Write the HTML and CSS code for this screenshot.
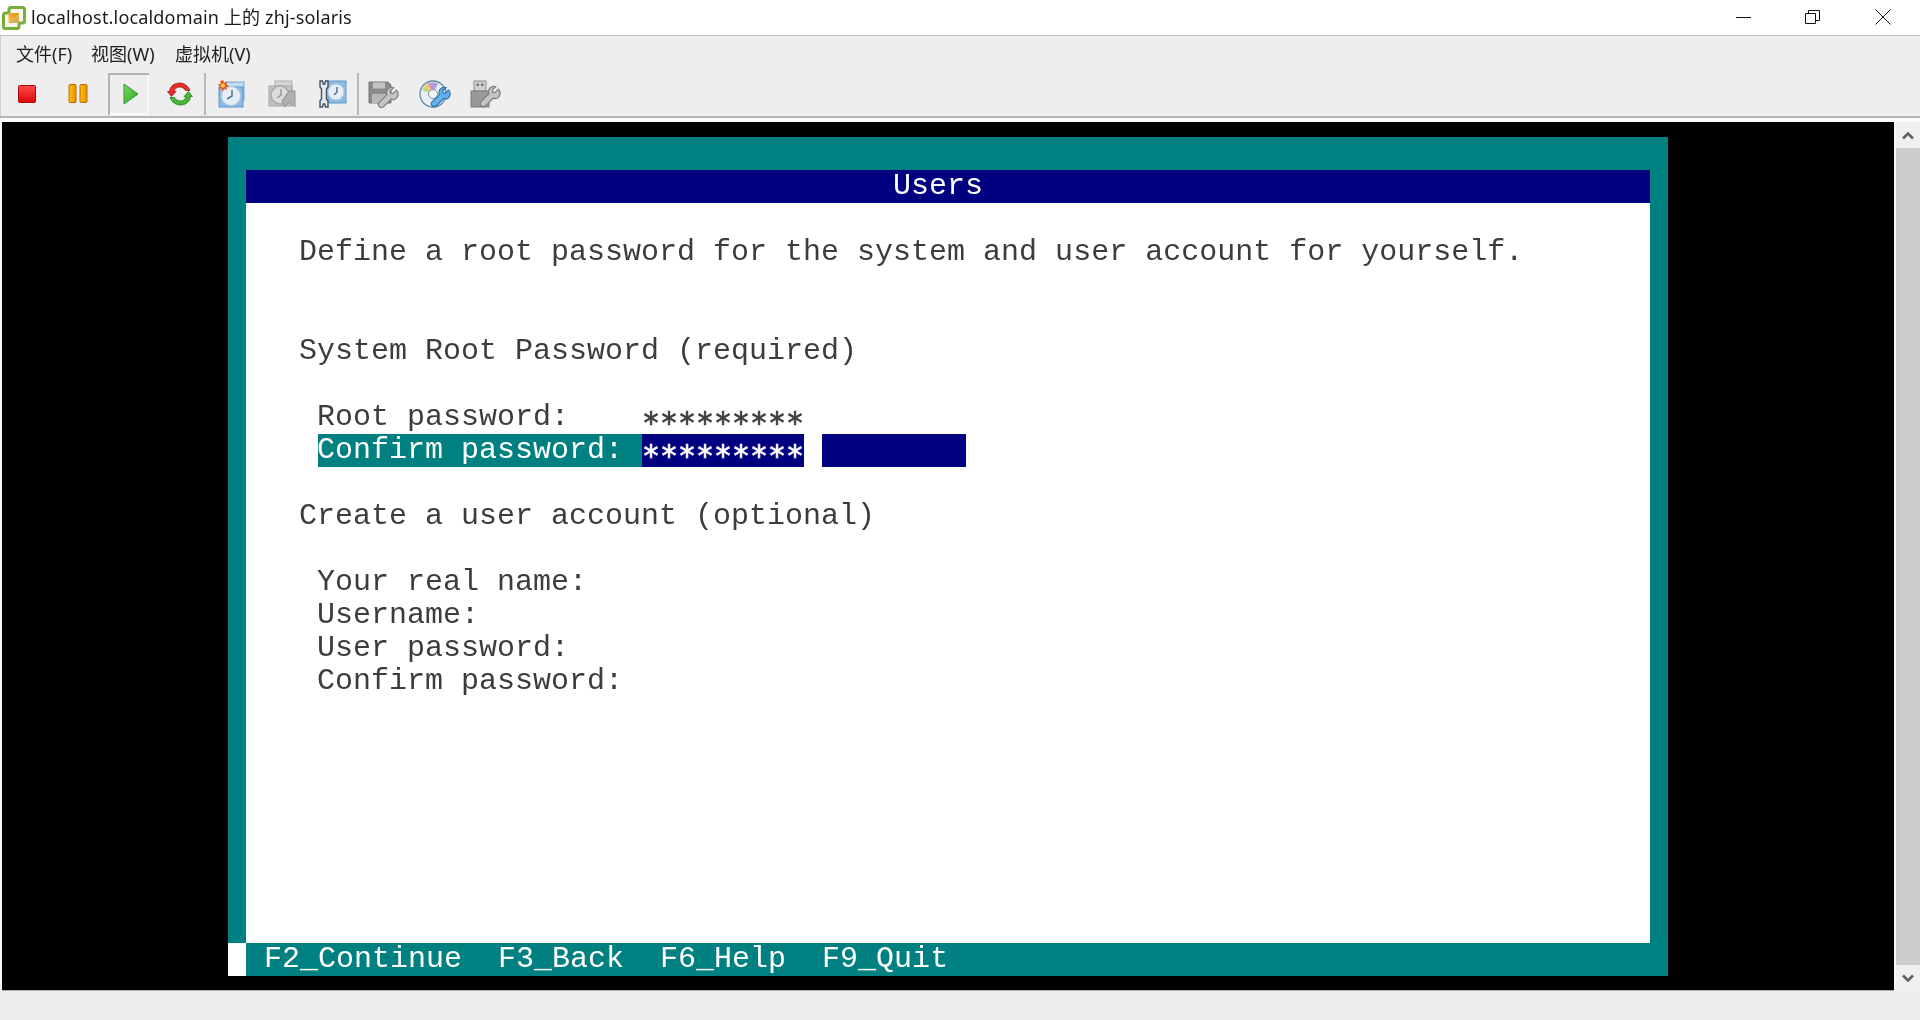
FILE: index.html
```html
<!DOCTYPE html>
<html lang="zh">
<head>
<meta charset="utf-8">
<title>localhost.localdomain 上的 zhj-solaris</title>
<link rel="stylesheet" href="styles.css">
</head>
<body>
<svg class="defs" width="0" height="0" aria-hidden="true">
  <defs>
    <linearGradient id="gStop" x1="0" y1="0" x2="0" y2="1"><stop offset="0" stop-color="#ff4a4a"/><stop offset="1" stop-color="#dc0606"/></linearGradient>
    <linearGradient id="gPause" x1="0" y1="0" x2="1" y2="0"><stop offset="0" stop-color="#ffc400"/><stop offset="1" stop-color="#f08c00"/></linearGradient>
    <linearGradient id="gPlay" x1="0" y1="0" x2="1" y2="1"><stop offset="0" stop-color="#7bd85a"/><stop offset="1" stop-color="#2aa52a"/></linearGradient>
    <linearGradient id="gLogo" x1="0" y1="1" x2="1" y2="0"><stop offset="0" stop-color="#f6c453"/><stop offset="1" stop-color="#e58a0c"/></linearGradient>
    <symbol id="wrench" viewBox="0 0 24 24" overflow="visible">
      <path d="M21 3.500L17 7.500 14.500 7 14 4.500 18 .800C14.500-.5 10.500 1.500 9.800 5c-.3 1.500 0 2.800.5 3.800L1.500 17.500c-1.500 1.500-1.500 3.500 0 5s3.500 1.500 5 0l8.700-8.700c1.300.6 2.800.7 4.300.2 3.500-1.300 5-7 1.500-10.500z"/>
    </symbol>
  </defs>
</svg>
<div class="window">
  <header class="titlebar">
    <svg class="app-icon" viewBox="0 0 24 24" width="24" height="24">
      <path d="M9 1.500h11.500a2 2 0 0 1 2 2V15a2 2 0 0 1-2 2H17v3.500a2 2 0 0 1-2 2H3.500a2 2 0 0 1-2-2V9a2 2 0 0 1 2-2H7V3.500a2 2 0 0 1 2-2z" fill="#f6f6ee" stroke="#75ae3a" stroke-width="3"/>
      <path d="M6.500 7h10.500v10H6.500z" fill="url(#gLogo)"/>
      <path d="M17 7.500L7 17h10z" fill="#d8b05c"/>
    </svg>
    <span class="title-text">localhost.localdomain 上的 zhj-solaris</span>
    <div class="window-controls">
      <svg class="ctl ctl-min" viewBox="0 0 16 16" width="16" height="16"><path d="M0 8.500h15" stroke="#111" fill="none"/></svg>
      <svg class="ctl ctl-max" viewBox="0 0 16 16" width="16" height="16"><path d="M.5 4.500h10v10H.5zM3.500 4.500v-3h11v10h-4" stroke="#111" fill="none"/></svg>
      <svg class="ctl ctl-close" viewBox="0 0 16 16" width="16" height="16"><path d="M.5.500l15 15M15.500.500l-15 15" stroke="#111" fill="none"/></svg>
    </div>
  </header>

  <nav class="menubar">
    <span class="menu-item m1">文件(F)</span>
    <span class="menu-item m2">视图(W)</span>
    <span class="menu-item m3">虚拟机(V)</span>
  </nav>

  <div class="toolbar">
    <div class="tool">
      <svg viewBox="0 0 18 18" width="18" height="18"><rect x=".5" y=".5" width="17" height="17" rx="1" fill="url(#gStop)" stroke="#a80c0c"/></svg>
    </div>
    <div class="tool">
      <svg viewBox="0 0 20 20" width="20" height="20"><rect x="1" y=".5" width="7" height="18" rx="1" fill="url(#gPause)" stroke="#b86a10"/><rect x="12" y=".5" width="7" height="18" rx="1" fill="url(#gPause)" stroke="#b86a10"/></svg>
    </div>
    <div class="tool tool-active">
      <svg viewBox="0 0 16 22" width="16" height="22"><path d="M1 1l14 10L1 21z" fill="url(#gPlay)" stroke="#2f9a2f"/></svg>
    </div>
    <div class="tool">
      <svg viewBox="0 0 26 24" width="26" height="24">
        <path d="M23 8.500C21 3.500 17 1 12.500 1 7 1 3 4.500 2.500 9.500H.5L4.500 14.500 9 9.500H7C7.500 7 9.500 5 12.500 5c2.500 0 4.500 1 6 3.500z" fill="#e5302a" stroke="#a81c18" stroke-width=".8"/>
        <path d="M23 8.500C21 3.500 17 1 12.500 1 7 1 3 4.500 2.500 9.500H.5L4.500 14.500 9 9.500H7C7.500 7 9.500 5 12.500 5c2.500 0 4.500 1 6 3.500z" transform="rotate(180 13 12)" fill="#47b53a" stroke="#25841e" stroke-width=".8"/>
      </svg>
    </div>
    <span class="tool-sep"></span>
    <div class="tool">
      <svg viewBox="0 0 28 28" width="28" height="28">
        <rect x="9" y="2" width="18" height="18" fill="#c3daf0" stroke="#6fa5d3"/>
        <rect x="2" y="7" width="24" height="20" fill="#8dbbe5" stroke="#5b95c9"/>
        <circle cx="14" cy="16" r="9.500" fill="#e6eef5" stroke="#b3cbe0"/>
        <path d="M15 10v6l-5 3" stroke="#55708e" stroke-width="1.500" fill="none"/>
        <path d="M6 0l1.300 2.800L10 1.500 9.300 4.500 12 6 9.200 7l.8 3-2.800-1.300L5.500 11 4.800 8.300 1.500 9 3 6.200.5 4.500l3-.5L3.500 1z" fill="#f4501c"/>
        <circle cx="6" cy="5.500" r="2" fill="#ffe15a"/>
      </svg>
    </div>
    <div class="tool">
      <svg viewBox="0 0 28 28" width="28" height="28">
        <rect x="7" y="1" width="17" height="18" fill="#d4d4d4" stroke="#adadad"/>
        <rect x="1" y="6" width="23" height="20" fill="#c2c2c2" stroke="#a6a6a6"/>
        <circle cx="12" cy="15" r="9" fill="#dcdcdc" stroke="#a8a8a8" stroke-width="1.500"/>
        <path d="M13 9v6l-4 3" stroke="#9a9a9a" stroke-width="1.500" fill="none"/>
        <path d="M21 11l6 0v16l-6-5-4 5-3-6z" fill="#b0b0b0" stroke="#919191"/>
      </svg>
    </div>
    <div class="tool">
      <svg viewBox="0 0 28 28" width="28" height="28">
        <rect x="9" y="1" width="18" height="22" fill="#8dbbe5" stroke="#5b95c9"/>
        <circle cx="17" cy="12" r="8" fill="#e6eef5" stroke="#b3cbe0"/>
        <path d="M18 7v5l-3 3" stroke="#55708e" stroke-width="1.500" fill="none"/>
        <path d="M1 1h2.500l.8 3h1.400l.8-3H9v6L7.500 9v10L9 21v6H6.500l-.8-3H4.300l-.8 3H1v-6l1.500-2V9L1 7z" fill="#e4e9ef" stroke="#46525f" stroke-width="1.400"/>
      </svg>
    </div>
    <span class="tool-sep"></span>
    <div class="tool">
      <svg viewBox="0 0 31 27" width="31" height="27">
        <path d="M1 1h19l3 3v18H1z" fill="#8b8b8b" stroke="#777"/>
        <rect x="5" y="1.500" width="12" height="6" fill="#c4c4c4"/>
        <rect x="4" y="13" width="16" height="9" fill="#b8b8b8"/>
        <use href="#wrench" x="10" y="6" width="21" height="21" class="wrench-gray"/>
      </svg>
    </div>
    <div class="tool">
      <svg viewBox="0 0 32 29" width="32" height="29">
        <circle cx="14" cy="14" r="13" fill="#e8edf2" stroke="#6d8aa4" stroke-width="1.300"/>
        <path d="M14 14L5 7a11 11 0 0 1 4-3.500z" fill="#f2c23e" opacity=".75"/>
        <path d="M14 14L9 3.500a11 11 0 0 1 5-1z" fill="#d06fc0" opacity=".75"/>
        <path d="M14 14V2.500a11 11 0 0 1 5 1z" fill="#7f90e8" opacity=".75"/>
        <path d="M14 14L5 7a11 11 0 0 0-1.500 3.500z" fill="#9ed65c" opacity=".75"/>
        <circle cx="14" cy="14" r="4.500" fill="#f3f5f7" stroke="#7f92a4"/>
        <use href="#wrench" x="12" y="7" width="20" height="20" class="wrench-blue"/>
      </svg>
    </div>
    <div class="tool">
      <svg viewBox="0 0 31 28" width="31" height="28">
        <rect x="4" y="1" width="12" height="10" fill="#d0d0d0" stroke="#8a8a8a"/>
        <rect x="6.500" y="3.500" width="2.500" height="2.500" fill="#777"/><rect x="11" y="3.500" width="2.500" height="2.500" fill="#777"/>
        <rect x="1" y="11" width="18" height="16" fill="#989898" stroke="#7c7c7c"/>
        <use href="#wrench" x="10" y="6" width="21" height="21" class="wrench-gray"/>
      </svg>
    </div>
  </div>

  <div class="viewport-rule"></div>

  <main class="viewport">
    <div class="console">
      <section class="screen">
        <div class="screen-title">Users</div>
        <div class="panel">
          <div class="line col4">Define a root password for the system and user account for yourself.</div>
          <div class="line col4 gap2">System Root Password (required)</div>
          <div class="line field gap1"><span class="label">Root password:</span><span class="value">*********</span></div>
          <div class="line field active"><span class="label">Confirm password:</span><span class="value">*********</span><span class="extra"></span></div>
          <div class="line col4 gap1">Create a user account (optional)</div>
          <div class="line field gap1">Your real name:</div>
          <div class="line field">Username:</div>
          <div class="line field">User password:</div>
          <div class="line field">Confirm password:</div>
        </div>
        <footer class="keys">
          <span class="keys-corner"></span>
          <span class="key">F2_Continue</span>
          <span class="key">F3_Back</span>
          <span class="key">F6_Help</span>
          <span class="key">F9_Quit</span>
        </footer>
      </section>
    </div>
    <aside class="scrollbar">
      <span class="sb-btn"><svg viewBox="0 0 12 9" width="12" height="9"><path d="M1 7.500l5-5 5 5" stroke="#606060" stroke-width="2.600" fill="none"/></svg></span>
      <span class="sb-thumb"></span>
      <span class="sb-btn"><svg viewBox="0 0 12 9" width="12" height="9"><path d="M1 1.500l5 5 5-5" stroke="#606060" stroke-width="2.600" fill="none"/></svg></span>
    </aside>
  </main>

  <div class="statusbar"></div>
</div>
</body>
</html>
```

FILE: styles.css
```css
* { box-sizing: border-box; }
html, body { margin: 0; padding: 0; height: 100%; overflow: hidden; background: #fff; }
.defs { position: absolute; }
.window {
  width: 1920px; height: 1020px; display: flex; flex-direction: column;
  font-family: "Noto Sans", "Noto Sans CJK SC", sans-serif; color: #1a1a1a;
}
.titlebar {
  height: 36px; flex: none; display: flex; align-items: center; background: #fff;
  border-bottom: 1px solid #c4c4c4; padding-left: 2px;
}
.app-icon { flex: none; margin-top: 0; filter: blur(.3px); }
.title-text { margin-left: 5px; font-size: 18px; letter-spacing: .17px; line-height: 34px; margin-top: -2px; filter: blur(.25px); }
.window-controls { margin-left: auto; display: flex; align-items: center; margin-top: -2px; }
.ctl { display: block; flex: none; }
.ctl-min { margin-right: 53px; }
.ctl-max { margin-right: 54px; }
.ctl-close { margin-right: 29px; }

.menubar {
  height: 36px; flex: none; background: #eee; display: flex; align-items: center;
  padding-left: 15px; border-left: 1px solid #d0d0d0;
}
.menu-item { font-size: 18px; line-height: 24px; color: #222; filter: blur(.35px); white-space: nowrap; }
.m1 { width: 75px; }
.m2 { width: 84px; }

.toolbar {
  height: 44px; flex: none; background: #eee; display: flex; align-items: center;
  padding-left: 0; border-left: 1px solid #d0d0d0;
}
.tool {
  width: 51px; height: 42px; flex: none; display: flex; align-items: center; justify-content: center;
  filter: blur(.35px);
}
.tool-active { box-shadow: inset 2px 2px 0 #b4b4b4, inset -2px -2px 0 #f8f8f8; width: 41px; margin: 0 5px; padding-left: 4px; }
.tool-sep { width: 2px; height: 42px; margin: 0 -1px; background: #b8b8b8; flex: none; position: relative; }
.wrench-gray { fill: #c4c4c4; stroke: #7f7f7f; stroke-width: 1.400; }
.wrench-blue { fill: #62b2ef; stroke: #2e74ad; stroke-width: 1.400; }

.viewport-rule { height: 6px; flex: none; background: #fafafa; border-top: 2px solid #b4b4b4; }

.viewport { flex: none; height: 869px; display: flex; background: #f7f7f7; padding-left: 2px; }
.console {
  width: 1892px; height: 869px; flex: none; background: #000; padding: 15px 0 0 226px;
  border-bottom: 1px solid #aaa;
}
.screen {
  width: 1440px; height: 839px; background: #008080; padding: 33px 0 0 18px;
  display: flex; flex-direction: column;
  font-family: "Liberation Mono", monospace; font-size: 30px; line-height: 33px;
  color: #3c3c3c;
}
.screen-title {
  width: 1404px; height: 33px; flex: none; background: #000080; color: #fff; text-align: center;
  padding-right: 20px; filter: blur(.3px);
}
.panel { width: 1404px; flex: 1; background: #fff; padding-top: 33px; filter: blur(.3px); }
.line { height: 33px; white-space: pre; text-indent: -1px; }
.col4 { padding-left: 54px; }
.field { padding-left: 72px; display: flex; }
.gap1 { margin-top: 33px; }
.gap2 { margin-top: 66px; }
.label { width: 324px; flex: none; }
.value {
  width: 162px; flex: none; padding-top: 5px; text-indent: 0;
  font-family: "DejaVu Sans Mono", monospace; font-size: 30px; letter-spacing: -.06px;
  -webkit-text-stroke: .7px currentColor;
}
.active { padding-left: 0; margin-left: 72px; }
.active .label { background: #008080; color: #fff; }
.active .value { background: #000080; color: #fff; }
.extra { width: 144px; flex: none; margin-left: 18px; background: #000080; }
.keys { height: 33px; flex: none; display: flex; margin-left: -18px; color: #fff; filter: blur(.3px); }
.keys-corner { width: 18px; height: 33px; background: #fff; flex: none; margin-right: 18px; }
.key { margin-right: 36px; }

.scrollbar { width: 26px; flex: none; display: flex; flex-direction: column; background: #f0f0f0; border-left: 2px solid #fafafa; }
.sb-btn { height: 26px; flex: none; display: flex; align-items: center; justify-content: center; }
.sb-thumb { flex: 1; background: #cdcdcd; }

.statusbar { flex: 1; background: #eee; }
```
